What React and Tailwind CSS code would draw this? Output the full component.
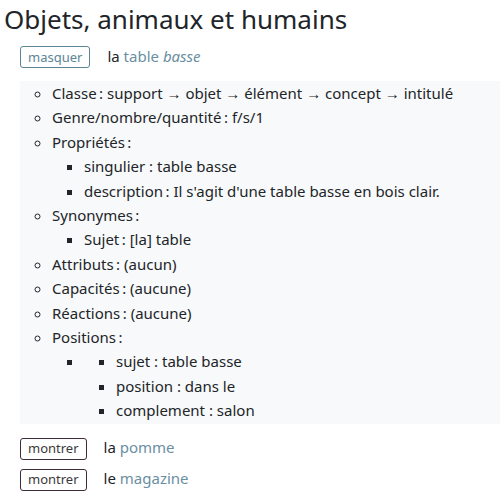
const font = { fontFamily: '"Noto Sans", "Open Sans", sans-serif' };
const t = '\u202F';

function Toggle({ label, tone }) {
  const cls =
    tone === 'open'
      ? 'border-[#5b8595] text-[#5b8595]'
      : 'border-[#3e2c3b] text-[#3a3a3a]';
  return (
    <button className={`h-[22px] rounded-[3px] border bg-white px-[7px] text-[13px] leading-none ${cls}`}>
      {label}
    </button>
  );
}

function Row({ label, tone, art, name, italic }) {
  return (
    <div className="flex h-[22px] items-center">
      <div className="w-[20px]" />
      <Toggle label={label} tone={tone} />
      <div className="ml-[17px] -mt-[2px] text-[15px] text-[#212529]">
        {art}{' '}
        <span className="text-[#6a8fa1]">
          {name}
          {italic && <> <i>{italic}</i></>}
        </span>
      </div>
    </div>
  );
}

export default function App() {
  return (
    <div className="min-h-screen bg-white text-[#212529]" style={font}>
      <h1 className="pl-[4px] pt-[2px] text-[26px] leading-[34px]">Objets, animaux et humains</h1>
      <div className="mt-[10px]">
        <Row label="masquer" tone="open" art="la" name="table" italic="basse" />
      </div>
      <div className="ml-[20px] mt-[13px] bg-[#f8f9fa] pb-[1px] text-[15px] leading-[24.4px]">
        <ul className="list-[circle] pl-[32px]">
          <li>Classe{t}: support → objet → élément → concept → intitulé</li>
          <li>Genre/nombre/quantité{t}: f/s/1</li>
          <li>
            Propriétés{t}:
            <ul className="list-[square] pl-[32px]">
              <li>singulier : table basse</li>
              <li>description{t}: Il s'agit d'une table basse en bois clair.</li>
            </ul>
          </li>
          <li>
            Synonymes{t}:
            <ul className="list-[square] pl-[32px]">
              <li>Sujet{t}: [la] table</li>
            </ul>
          </li>
          <li>Attributs{t}: (aucun)</li>
          <li>Capacités{t}: (aucune)</li>
          <li>Réactions{t}: (aucune)</li>
          <li>
            Positions{t}:
            <ul className="list-[square] pl-[32px]">
              <li>
                <ul className="list-[square] pl-[32px]">
                  <li>sujet : table basse</li>
                  <li>position : dans le</li>
                  <li>complement : salon</li>
                </ul>
              </li>
            </ul>
          </li>
        </ul>
      </div>
      <div className="mt-[14px] flex flex-col gap-[9px]">
        <Row label="montrer" art="la" name="pomme" />
        <Row label="montrer" art="le" name="magazine" />
      </div>
    </div>
  );
}
